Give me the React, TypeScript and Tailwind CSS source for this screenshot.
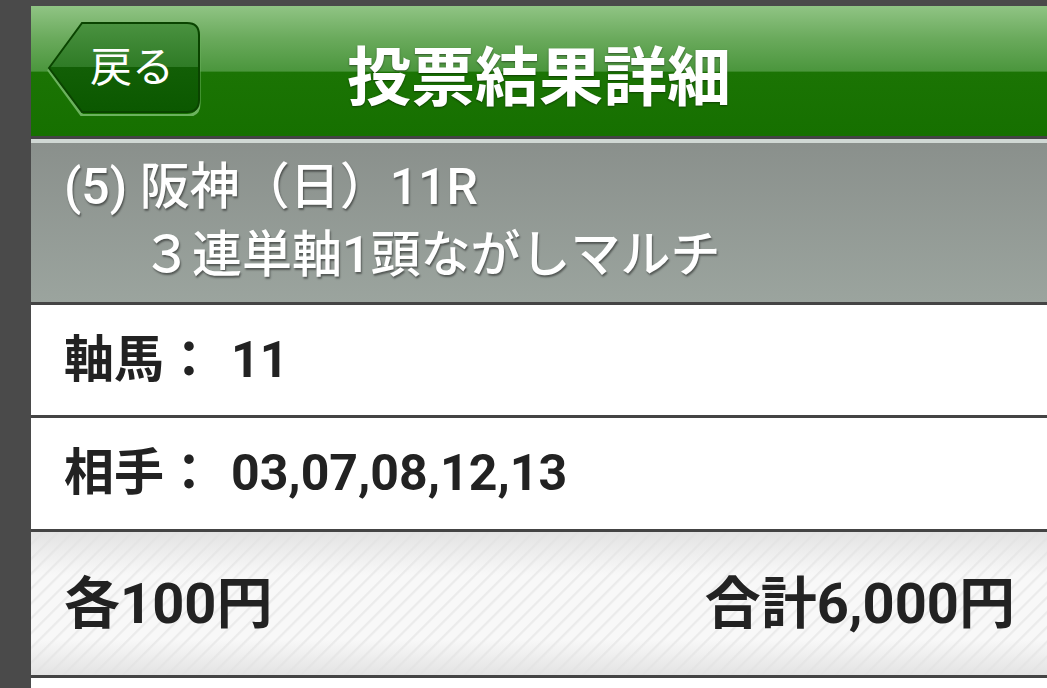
import React from "react";

const FONT = "font-['Roboto','Noto_Sans_CJK_JP',sans-serif]";

function BackButton() {
  return (
    <button className="relative w-[156px] h-[96px] flex items-center justify-end pr-[28px]">
      <svg className="absolute inset-0" width="156" height="96" viewBox="0 0 156 96">
        <defs>
          <linearGradient id="btn" x1="0" y1="0" x2="0" y2="1">
            <stop offset="0" stopColor="#4a9240" />
            <stop offset="0.49" stopColor="#2f7b26" />
            <stop offset="0.5" stopColor="#125f06" />
            <stop offset="1" stopColor="#0b5800" />
          </linearGradient>
        </defs>
        <path
          d="M3 49 L36 4 H141 Q153 4 153 16 V82 Q153 94 141 94 H36 Z"
          fill="none"
          stroke="#6bb25d"
          strokeWidth="3"
          transform="translate(0 1.5)"
        />
        <path
          d="M3 48 L36 3 H141 Q153 3 153 15 V80 Q153 92 141 92 H36 Z"
          fill="url(#btn)"
          stroke="#0a4400"
          strokeWidth="2"
        />
      </svg>
      <span className="relative text-white text-[42px] leading-none">戻る</span>
    </button>
  );
}

export default function App() {
  return (
    <div className={`min-h-screen bg-[#4a4a4a] pt-[6px] pl-[31px] ${FONT}`}>
      <div className="bg-white">
        {/* Header */}
        <div className="h-[130px] grid grid-cols-[1fr_auto_1fr] items-center bg-[linear-gradient(to_bottom,#90c484_0%,#6aaa5c_25%,#4b963d_50%,#1b7404_51%,#167000_100%)]">
          <div className="pl-[15px] pb-[6px]">
            <BackButton />
          </div>
          <h1 className="text-white text-[64px] font-bold leading-none pt-[16px] [text-shadow:0_1px_2px_rgba(0,0,0,0.45)]">
            投票結果詳細
          </h1>
          <div />
        </div>
        <div className="h-[3px] bg-[#444]" />
        <div className="h-[4px] bg-[#d0d8d4]" />

        {/* Race info */}
        <div className="h-[159px] pt-[10px] pl-[33px] bg-[linear-gradient(to_bottom,#8a908c,#9ba49e)] text-white text-[50px] font-medium leading-[68px] [text-shadow:1px_2px_2px_rgba(0,0,0,0.45)]">
          <div>(5) 阪神（日）11R</div>
          <div className="pl-[78px]">３連単軸1頭ながしマルチ</div>
        </div>
        <div className="h-[3px] bg-[#444]" />

        {/* Rows */}
        <div className="h-[110px] flex items-center pl-[33px] text-[#222] text-[50px] font-bold">
          <span>軸馬：</span>
          <span className="ml-[17px]">11</span>
        </div>
        <div className="h-[3px] bg-[#444]" />
        <div className="h-[111px] flex items-center pl-[33px] text-[#222] text-[50px] font-bold">
          <span>相手：</span>
          <span className="ml-[17px]">03,07,08,12,13</span>
        </div>
        <div className="h-[3px] bg-[#444]" />

        {/* Total */}
        <div className="relative h-[143px] bg-[#f7f7f7]">
          <div className="absolute inset-0 bg-[repeating-linear-gradient(135deg,#f8f8f8_0px,#f8f8f8_7px,#ebebeb_8px,#ebebeb_9px,#f8f8f8_10.5px)]" />
          <div className="absolute inset-0 bg-[linear-gradient(to_bottom,rgba(225,225,225,0.9)_0%,rgba(255,255,255,0)_30%,rgba(255,255,255,0)_75%,rgba(225,225,225,0.9)_100%)]" />
          <div className="relative h-full flex items-center justify-between pl-[33px] pr-[32px] text-[#222] text-[56px] font-bold">
            <span>各100円</span>
            <span>合計6,000円</span>
          </div>
        </div>
        <div className="h-[3px] bg-[#444]" />
        <div className="h-[20px] bg-white" />
      </div>
    </div>
  );
}
